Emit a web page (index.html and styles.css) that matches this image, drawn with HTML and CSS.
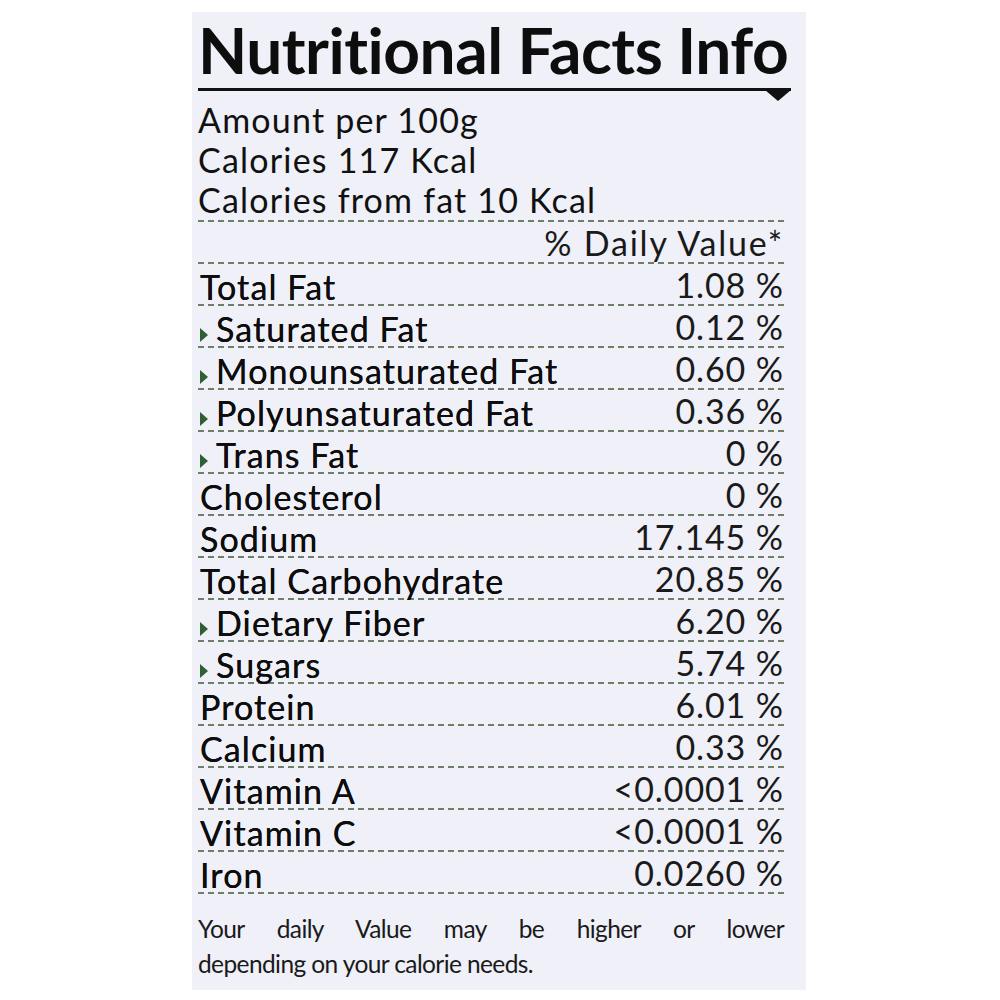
FILE: index.html
```html
<!DOCTYPE html>
<html>
<head>
<meta charset="utf-8">
<link rel="stylesheet" href="styles.css">
</head>
<body>
<div class="panel">
  <h1 class="title">Nutritional Facts Info</h1>
  <div class="rule"></div>
  <div class="info">
    <div class="info-line">Amount per 100g</div>
    <div class="info-line">Calories 117 Kcal</div>
    <div class="info-line">Calories from fat 10 Kcal</div>
  </div>
  <div class="row dv-row"><span class="val dv">% Daily Value*</span></div>
  <div class="row"><span class="label">Total Fat</span><span class="val">1.08 %</span></div>
  <div class="row sub"><span class="label"><i class="mark"></i>Saturated Fat</span><span class="val">0.12 %</span></div>
  <div class="row sub"><span class="label"><i class="mark"></i>Monounsaturated Fat</span><span class="val">0.60 %</span></div>
  <div class="row sub"><span class="label"><i class="mark"></i>Polyunsaturated Fat</span><span class="val">0.36 %</span></div>
  <div class="row sub"><span class="label"><i class="mark"></i>Trans Fat</span><span class="val">0 %</span></div>
  <div class="row"><span class="label">Cholesterol</span><span class="val">0 %</span></div>
  <div class="row"><span class="label">Sodium</span><span class="val">17.145 %</span></div>
  <div class="row"><span class="label">Total Carbohydrate</span><span class="val">20.85 %</span></div>
  <div class="row sub"><span class="label"><i class="mark"></i>Dietary Fiber</span><span class="val">6.20 %</span></div>
  <div class="row sub"><span class="label"><i class="mark"></i>Sugars</span><span class="val">5.74 %</span></div>
  <div class="row"><span class="label">Protein</span><span class="val">6.01 %</span></div>
  <div class="row"><span class="label">Calcium</span><span class="val">0.33 %</span></div>
  <div class="row"><span class="label">Vitamin A</span><span class="val">&lt;0.0001 %</span></div>
  <div class="row"><span class="label">Vitamin C</span><span class="val">&lt;0.0001 %</span></div>
  <div class="row"><span class="label">Iron</span><span class="val">0.0260 %</span></div>
  <div class="note">
    <p class="note-line first">Your daily Value may be higher or lower</p>
    <p class="note-line">depending on your calorie needs.</p>
  </div>
</div>
</body>
</html>
```
FILE: styles.css
```css
html, body {
  margin: 0;
  padding: 0;
  background: #ffffff;
}
body {
  font-family: "Lato", "Noto Sans", sans-serif;
  color: #111111;
}
.panel {
  margin: 12px 0 0 192px;
  width: 614px;
  height: 978px;
  box-sizing: border-box;
  padding: 0 22px 0 6px;
  background: #eff0f8;
}
.title {
  margin: 0;
  height: 76px;
  font-size: 64px;
  font-weight: 700;
  line-height: 76px;
  letter-spacing: -0.5px;
  white-space: nowrap;
  color: #0d0d0d;
}
.rule {
  position: relative;
  height: 3px;
  background: #111111;
  margin-right: -7px;
}
.rule::after {
  content: "";
  position: absolute;
  right: 0;
  top: 2px;
  border-left: 13px solid transparent;
  border-right: 13px solid transparent;
  border-top: 11px solid #111111;
}
.info {
  padding-top: 9px;
  border-bottom: 2px dashed #6f7e67;
}
.info-line {
  height: 40px;
  line-height: 40px;
  font-size: 34px;
  letter-spacing: 1.2px;
  white-space: nowrap;
}
.row {
  display: flex;
  justify-content: space-between;
  align-items: center;
  height: 40px;
  border-bottom: 2px dashed #6f7e67;
  font-size: 34px;
  white-space: nowrap;
}
.dv-row {
  justify-content: flex-end;
}
.label {
  display: flex;
  align-items: center;
  padding-left: 2px;
  padding-top: 5px;
  letter-spacing: 1.1px;
  color: #0d0d0d;
  text-shadow: 0 0 0.4px #0d0d0d;
}
.mark {
  display: block;
  width: 0;
  height: 0;
  margin-top: 12px;
  margin-right: 8px;
  border-top: 7px solid transparent;
  border-bottom: 7px solid transparent;
  border-left: 8px solid #2f5f35;
}
.val {
  letter-spacing: 0.9px;
  color: #1a1a1a;
}
.val.dv {
  letter-spacing: 1.8px;
}
.note {
  margin-top: 17px;
  font-size: 24.5px;
  line-height: 35px;
  letter-spacing: -0.6px;
  color: #1a1a1a;
}
.note-line {
  margin: 0;
}
.note-line.first {
  text-align: justify;
  text-align-last: justify;
}
```
